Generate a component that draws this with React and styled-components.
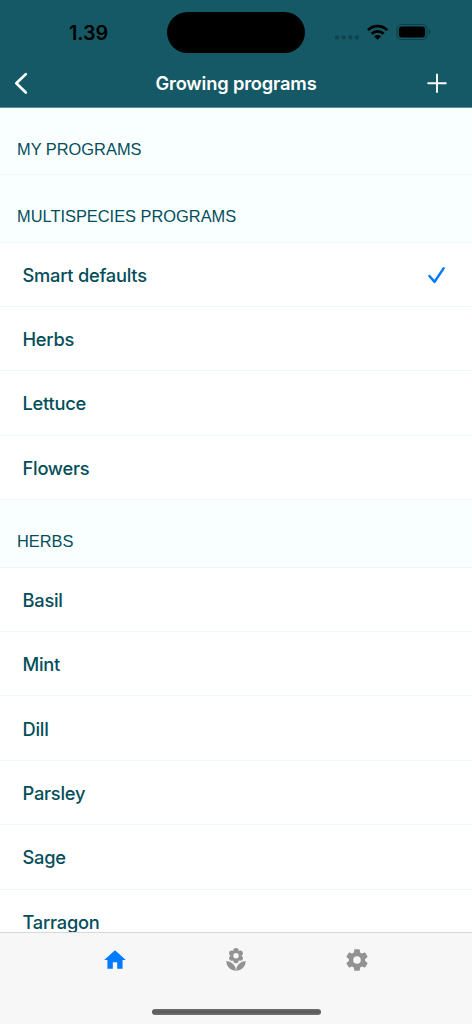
import React from "react";
import styled, { createGlobalStyle } from "styled-components";
import { MdHome, MdLocalFlorist } from "react-icons/md";

const GlobalStyle = createGlobalStyle`
  body {
    margin: 0;
    background: #ffffff;
  }

  * {
    box-sizing: border-box;
  }
`;

const Screen = styled.div`
  display: flex;
  flex-direction: column;
  width: 472px;
  height: 1024px;
  overflow: hidden;
  font-family: Inter, sans-serif;
  color: #044e5b;
  background: #ffffff;
`;

const Header = styled.header`
  flex: none;
  height: 108px;
  background: #145965;
  border-bottom: 1px solid #5d8e97;
`;

const StatusBar = styled.div`
  display: grid;
  grid-template-columns: 167px 138px 1fr;
  height: 60px;
  padding-top: 12px;
`;

const Time = styled.div`
  padding-left: 69px;
  font-size: 19.8px;
  font-weight: 600;
  line-height: 42px;
  letter-spacing: -0.05px;
  color: #000000;
`;

const Island = styled.div`
  height: 41px;
  border-radius: 21px;
  background: #000000;
`;

const StatusIcons = styled.svg`
  display: block;
  width: 100px;
  height: 24px;
  margin: 8px 0 0 28px;
`;

const NavBar = styled.div`
  display: grid;
  grid-template-columns: 60px 1fr 60px;
  align-items: center;
  height: 46px;

  & > svg {
    display: block;
  }
`;

const BackIcon = styled.svg`
  width: 16px;
  height: 24px;
  margin-left: 13px;
`;

const AddIcon = styled.svg`
  width: 22px;
  height: 22px;
  margin-left: 14px;
`;

const Title = styled.h1`
  margin: 0;
  font-size: 18.3px;
  font-weight: 600;
  line-height: 24px;
  letter-spacing: -0.16px;
  text-align: center;
  color: #ffffff;
`;

const List = styled.main`
  flex: 1;
  min-height: 0;
  overflow: hidden;
`;

const SectionTitle = styled.h2`
  height: ${({ $first }) => ($first ? "67px" : "67.5px")};
  margin: 0;
  padding: 31px 17px 0;
  border-bottom: 1px solid #edf8f8;
  background: #f9ffff;
  font-family: "Liberation Sans", sans-serif;
  font-size: 16.4px;
  font-weight: 400;
  line-height: 20px;
`;

const Row = styled.div`
  display: flex;
  align-items: center;
  justify-content: space-between;
  height: 64.4px;
  padding: 1px 26px 0 22.5px;
  border-bottom: 1px solid #edf8f8;
  font-size: 18.3px;
  font-weight: 500;
  letter-spacing: -0.25px;
`;

const CheckIcon = styled.svg`
  width: 20px;
  height: 20px;
`;

const TabBar = styled.nav`
  flex: none;
  display: flex;
  flex-direction: column;
  align-items: center;
  justify-content: space-between;
  height: 92px;
  padding: 14px 0 9px;
  border-top: 1px solid #d8d8d8;
  background: #f7f7f7;
`;

const Tabs = styled.div`
  display: grid;
  grid-template-columns: repeat(3, 120.6px);
  justify-items: center;
`;

const Tab = styled.div`
  height: 26px;
  color: ${({ $active }) => ($active ? "#007aff" : "#929292")};

  & > svg {
    display: block;
    width: 26px;
    height: 26px;
  }
`;

const HomeIndicator = styled.div`
  width: 169px;
  height: 6px;
  border-radius: 3px;
  background: linear-gradient(#6d6d6d, #595959 50%, #747474);
`;

const SettingsIcon = () => (
  <svg viewBox="0 0 24 24" fill="currentColor">
    <path d="M12 15.5A3.5 3.5 0 0 1 8.5 12 3.5 3.5 0 0 1 12 8.5a3.5 3.5 0 0 1 3.5 3.5 3.5 3.5 0 0 1-3.5 3.5m7.43-2.53c.04-.32.07-.64.07-.97s-.03-.66-.07-1l2.11-1.63c.19-.15.24-.42.12-.64l-2-3.46c-.12-.22-.39-.31-.61-.22l-2.49 1c-.52-.39-1.06-.73-1.69-.98l-.37-2.65A.506.506 0 0 0 14 2h-4c-.25 0-.46.18-.5.42l-.37 2.65c-.63.25-1.17.59-1.69.98l-2.49-1c-.22-.09-.49 0-.61.22l-2 3.46c-.13.22-.07.49.12.64L4.57 11c-.04.34-.07.67-.07 1s.03.65.07.97l-2.11 1.66c-.19.15-.25.42-.12.64l2 3.46c.12.22.39.3.61.22l2.49-1.01c.52.4 1.06.74 1.69.99l.37 2.65c.04.24.25.42.5.42h4c.25 0 .46-.18.5-.42l.37-2.65c.63-.26 1.17-.59 1.69-.99l2.49 1.01c.22.08.49 0 .61-.22l2-3.46c.12-.22.07-.49-.12-.64z" />
  </svg>
);

const sections = [
  { title: "MY PROGRAMS", rows: [] },
  {
    title: "MULTISPECIES PROGRAMS",
    rows: ["Smart defaults", "Herbs", "Lettuce", "Flowers"],
  },
  {
    title: "HERBS",
    rows: ["Basil", "Mint", "Dill", "Parsley", "Sage", "Tarragon"],
  },
];

const App = () => {
  const selected = "Smart defaults";

  return (
    <Screen>
      <GlobalStyle />
      <Header>
        <StatusBar>
          <Time>1.39</Time>
          <Island />
          <StatusIcons viewBox="333 20 100 24">
            <g fill="#0c4550">
              <circle cx="337.1" cy="37.4" r="2.1" />
              <circle cx="343.7" cy="37.4" r="2.1" />
              <circle cx="350.3" cy="37.4" r="2.1" />
              <circle cx="356.8" cy="37.4" r="2.1" />
            </g>
            <g fill="none" stroke="#000000" strokeWidth="2.7">
              <path d="M368 30.1a13.6 13.6 0 0 1 19.2 0" />
              <path d="M371.6 33.8a8.5 8.5 0 0 1 12 0" />
            </g>
            <path d="M374.2 36.4a4.8 4.8 0 0 1 6.8 0L377.6 39.8z" fill="#000000" />
            <rect x="397" y="24.5" width="30" height="15" rx="4.8" fill="none" stroke="#0d424c" strokeWidth="1.2" />
            <rect x="398.9" y="26.6" width="26.2" height="10.8" rx="3" fill="#000000" />
            <path d="M428.8 29.6c2.4.9 2.4 3.9 0 4.8z" fill="#0c3f49" />
          </StatusIcons>
        </StatusBar>
        <NavBar>
          <BackIcon viewBox="0 0 16 24" fill="none" stroke="#ffffff" strokeWidth="2.7" strokeLinecap="round" strokeLinejoin="round">
            <path d="M12.8 3.1L3.3 12.3l9.5 9.2" />
          </BackIcon>
          <Title>Growing programs</Title>
          <AddIcon viewBox="0 0 22 22" stroke="#ffffff" strokeWidth="1.9" strokeLinecap="round">
            <path d="M11 2.5v17.6M2.2 11.3h17.6" />
          </AddIcon>
        </NavBar>
      </Header>
      <List>
        {sections.map((section, index) => (
          <section key={section.title}>
            <SectionTitle $first={index === 0}>{section.title}</SectionTitle>
            {section.rows.map((row) => (
              <Row key={row}>
                {row}
                {row === selected && (
                  <CheckIcon viewBox="0 0 20 20" fill="none" stroke="#007aff" strokeWidth="2.5" strokeLinecap="round" strokeLinejoin="round">
                    <path d="M3.4 11l5.2 5.8L17.6 3.4" />
                  </CheckIcon>
                )}
              </Row>
            ))}
          </section>
        ))}
      </List>
      <TabBar>
        <Tabs>
          <Tab $active><MdHome /></Tab>
          <Tab><MdLocalFlorist /></Tab>
          <Tab><SettingsIcon /></Tab>
        </Tabs>
        <HomeIndicator />
      </TabBar>
    </Screen>
  );
};

export default App;
